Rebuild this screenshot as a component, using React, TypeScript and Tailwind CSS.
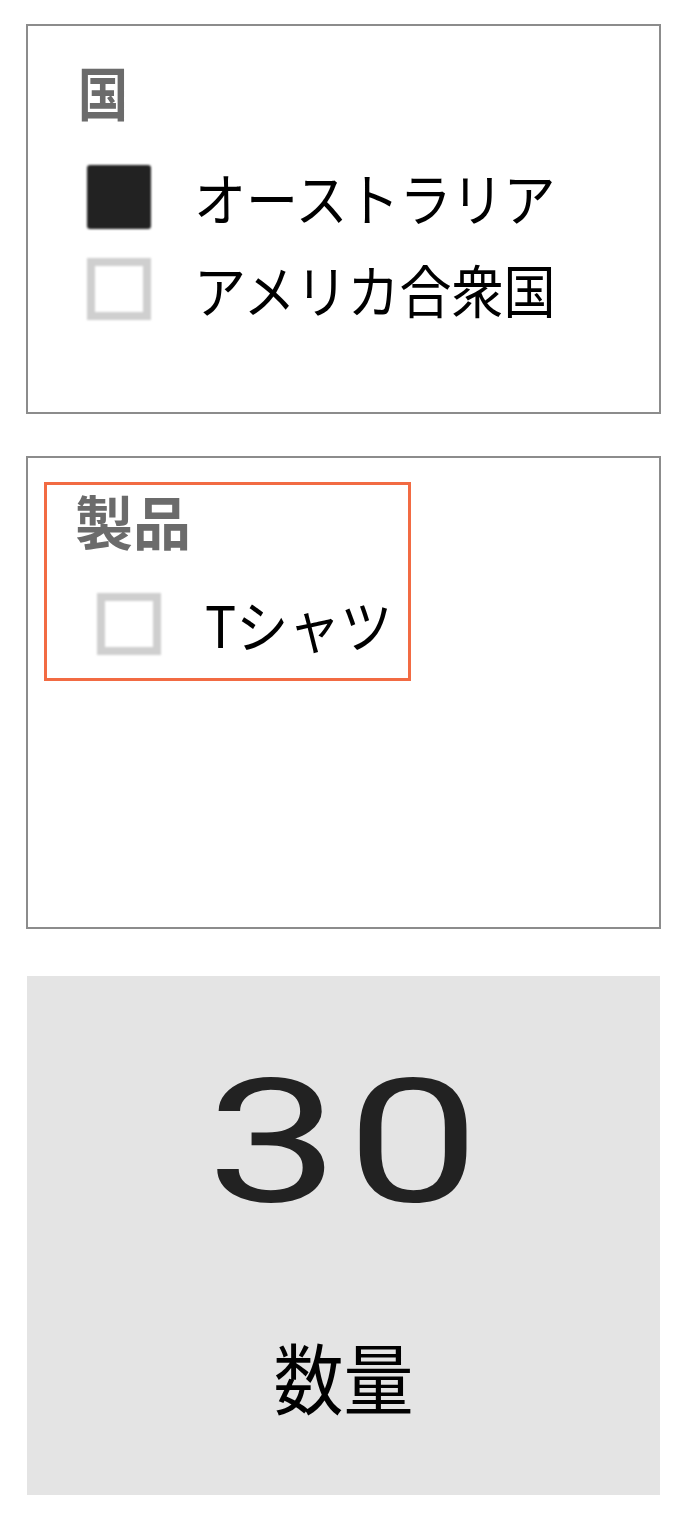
import React from "react";

const jp = { fontFamily: '"Noto Sans CJK JP", "Noto Sans", sans-serif' };

function Item({ checked, label }: { checked: boolean; label: string }) {
  return (
    <div className="flex items-center h-[92px]">
      {checked ? (
        <div className="w-[64px] h-[64px] bg-[#222222] rounded-[3px] blur-[1px] shrink-0" />
      ) : (
        <div className="w-[64px] h-[62px] border-[8px] border-[#cfcfcf] bg-white blur-[1px] shrink-0" />
      )}
      <span
        className="ml-[43px] inline-block text-[52px] leading-none text-black scale-y-[1.1]"
        style={jp}
      >
        {label}
      </span>
    </div>
  );
}

export default function App() {
  return (
    <div className="w-[688px] h-[1536px] bg-white px-[26px] pt-[24px]" style={jp}>
      <div className="w-[635px] h-[390px] border-2 border-[#8c8c8c] pl-[59px] pt-[40px]">
        <div className="inline-block text-[50px] font-bold leading-none text-[#6b6b6b] -ml-[9px] scale-y-[1.15]">
          国
        </div>
        <div className="mt-[33px]">
          <Item checked label="オーストラリア" />
          <Item checked={false} label="アメリカ合衆国" />
        </div>
      </div>

      <div className="mt-[42px] w-[635px] h-[473px] border-2 border-[#8c8c8c] pl-[16px] pt-[24px]">
        <div className="w-[367px] h-[199px] border-[3px] border-[#f26b43] pl-[28px] pt-[6px]">
          <div className="text-[58px] font-bold leading-none text-[#6b6b6b]">製品</div>
          <div className="pl-[22px] mt-[37px]">
            <div className="flex items-center h-[76px]">
              <div className="w-[64px] h-[62px] border-[8px] border-[#cfcfcf] bg-white blur-[1px] shrink-0" />
              <span
                className="ml-[44px] inline-block text-[52px] leading-none text-black scale-y-[1.1]"
                style={jp}
              >
                Tシャツ
              </span>
            </div>
          </div>
        </div>
      </div>

      <div className="mt-[47px] ml-[1px] w-[633px] h-[519px] bg-[#e4e4e4] flex flex-col items-center pt-[80px]">
        <div
          className="inline-block text-[172px] leading-none text-[#222222] tracking-[5px] pl-[5px] scale-x-[1.38]"
          style={{ fontFamily: 'Roboto, "Noto Sans", sans-serif' }}
        >
          30
        </div>
        <div
          className="mt-[113px] inline-block text-[70px] leading-none text-black scale-y-[1.1]"
          style={jp}
        >
          数量
        </div>
      </div>
    </div>
  );
}
